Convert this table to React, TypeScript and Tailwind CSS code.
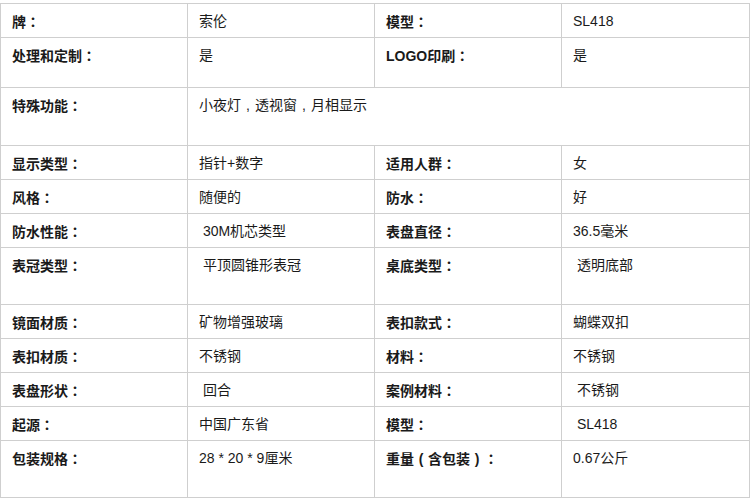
type Row = {
  h: string;
  cells: [string, string, string?, string?];
};

const rows: Row[] = [
  { h: "h-[34px]", cells: ["牌：", "索伦", "模型：", "SL418"] },
  { h: "h-[50px]", cells: ["处理和定制：", "是", "LOGO印刷：", "是"] },
  { h: "h-[58px]", cells: ["特殊功能：", "小夜灯，透视窗，月相显示"] },
  { h: "h-[34px]", cells: ["显示类型：", "指针+数字", "适用人群：", "女"] },
  { h: "h-[34px]", cells: ["风格：", "随便的", "防水：", "好"] },
  { h: "h-[34px]", cells: ["防水性能：", "\u00a030M机芯类型", "表盘直径：", "36.5毫米"] },
  { h: "h-[57px]", cells: ["表冠类型：", "\u00a0平顶圆锥形表冠", "桌底类型：", "\u00a0透明底部"] },
  { h: "h-[34px]", cells: ["镜面材质：", "矿物增强玻璃", "表扣款式：", "蝴蝶双扣"] },
  { h: "h-[34px]", cells: ["表扣材质：", "不锈钢", "材料：", "不锈钢"] },
  { h: "h-[34px]", cells: ["表盘形状：", "\u00a0回合", "案例材料：", "\u00a0不锈钢"] },
  { h: "h-[34px]", cells: ["起源：", "中国广东省", "模型：", "\u00a0SL418"] },
  { h: "h-[57px]", cells: ["包装规格：", "28 * 20 * 9厘米", "重量（含包装）：", "0.67公斤"] },
];

const cell = "border border-[#cfcfcf] align-top px-[11px] pt-[7px] leading-[20px]";

const half: Record<string, string> = { "，": ",", "（": "(", "）": ")" };

// full-width punctuation sits centred in its box on the original page
function Txt({ s }: { s: string }) {
  const parts = s.split(/([：，（）])/);
  return (
    <>
      {parts.map((p, i) =>
        p === "：" ? (
          <span key={i} className="font-['Noto_Sans_CJK_TC',sans-serif]">
            {p}
          </span>
        ) : half[p] ? (
          <span key={i} className="inline-block w-[1em] text-center">
            {half[p]}
          </span>
        ) : (
          p
        )
      )}
    </>
  );
}

export default function App() {
  return (
    <div className="w-[752px] h-[504px] bg-white pt-[3px] font-['Liberation_Sans','Noto_Sans_CJK_SC',sans-serif] text-[14px] text-[#1a1a1a]">
      <table className="w-[749px] border-collapse table-fixed">
        <colgroup>
          <col className="w-[187px]" />
          <col className="w-[187px]" />
          <col className="w-[187px]" />
          <col className="w-[188px]" />
        </colgroup>
        <tbody>
          {rows.map((r, i) => (
            <tr key={i} className={r.h}>
              <td className={`${cell} font-bold`}>
                <Txt s={r.cells[0]} />
              </td>
              {r.cells[2] === undefined ? (
                <td className={cell} colSpan={3}>
                  <Txt s={r.cells[1]} />
                </td>
              ) : (
                <>
                  <td className={cell}>{r.cells[1]}</td>
                  <td className={`${cell} font-bold`}>
                    <Txt s={r.cells[2]} />
                  </td>
                  <td className={cell}>{r.cells[3]}</td>
                </>
              )}
            </tr>
          ))}
        </tbody>
      </table>
    </div>
  );
}
